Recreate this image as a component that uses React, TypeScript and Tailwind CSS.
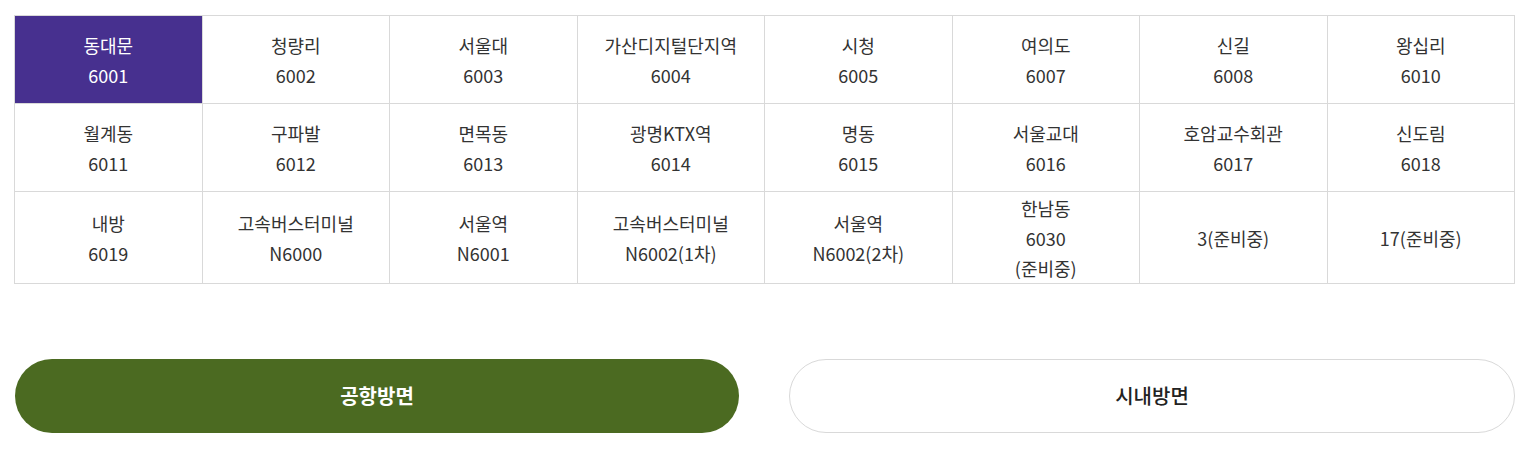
import React from "react";

type Cell = { name?: string; code: string; extra?: string; active?: boolean };

const rows: Cell[][] = [
  [
    { name: "동대문", code: "6001", active: true },
    { name: "청량리", code: "6002" },
    { name: "서울대", code: "6003" },
    { name: "가산디지털단지역", code: "6004" },
    { name: "시청", code: "6005" },
    { name: "여의도", code: "6007" },
    { name: "신길", code: "6008" },
    { name: "왕십리", code: "6010" },
  ],
  [
    { name: "월계동", code: "6011" },
    { name: "구파발", code: "6012" },
    { name: "면목동", code: "6013" },
    { name: "광명KTX역", code: "6014" },
    { name: "명동", code: "6015" },
    { name: "서울교대", code: "6016" },
    { name: "호암교수회관", code: "6017" },
    { name: "신도림", code: "6018" },
  ],
  [
    { name: "내방", code: "6019" },
    { name: "고속버스터미널", code: "N6000" },
    { name: "서울역", code: "N6001" },
    { name: "고속버스터미널", code: "N6002(1차)" },
    { name: "서울역", code: "N6002(2차)" },
    { name: "한남동", code: "6030", extra: "(준비중)" },
    { code: "3(준비중)" },
    { code: "17(준비중)" },
  ],
];

export default function App() {
  return (
    <div
      className="w-[1524px] h-[476px] bg-white pt-[15px] pl-[14px]"
      style={{ fontFamily: '"Noto Sans CJK KR", "Noto Sans", sans-serif' }}
    >
      <div className="w-[1501px] border-l border-t border-[#d9d9d9]">
        {rows.map((row, ri) => (
          <div
            key={ri}
            className={`grid grid-cols-8 ${ri === 2 ? "h-[92px]" : "h-[88px]"}`}
          >
            {row.map((c, ci) => (
              <div
                key={ci}
                className={`flex flex-col items-center justify-center border-r border-b border-[#d9d9d9] text-[18px] leading-[30px] ${
                  c.active ? "bg-[#47308f] text-white" : "bg-white text-[#333333]"
                }`}
              >
                {c.name && <span>{c.name}</span>}
                <span>{c.code}</span>
                {c.extra && <span>{c.extra}</span>}
              </div>
            ))}
          </div>
        ))}
      </div>
      <div className="mt-[75px] ml-[1px] w-[1500px] flex gap-[50px]">
        <button className="flex-1 h-[74px] rounded-full bg-[#4b6a21] text-white text-[20px] font-bold">
          공항방면
        </button>
        <button className="flex-1 h-[74px] rounded-full bg-white border border-[#d9d9d9] text-[#222222] text-[20px] font-medium">
          시내방면
        </button>
      </div>
    </div>
  );
}
